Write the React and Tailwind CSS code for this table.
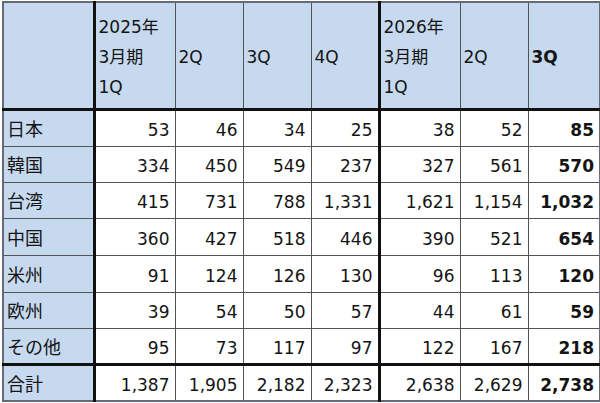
import React from "react";

const rows = [
  ["日本", "53", "46", "34", "25", "38", "52", "85"],
  ["韓国", "334", "450", "549", "237", "327", "561", "570"],
  ["台湾", "415", "731", "788", "1,331", "1,621", "1,154", "1,032"],
  ["中国", "360", "427", "518", "446", "390", "521", "654"],
  ["米州", "91", "124", "126", "130", "96", "113", "120"],
  ["欧州", "39", "54", "50", "57", "44", "61", "59"],
  ["その他", "95", "73", "117", "97", "122", "167", "218"],
];
const total = ["合計", "1,387", "1,905", "2,182", "2,323", "2,638", "2,629", "2,738"];
const heights = ["h-[37px]", "h-[36px]", "h-[36px]", "h-[37px]", "h-[37px]", "h-[36px]", "h-[36px]"];

const thin = "border border-[#505357]";

function cellBorder(ci) {
  let c = thin;
  if (ci === 0) c += " border-l-2 border-l-[#666c74]";
  if (ci === 1 || ci === 5) c += " border-l-[3px] border-l-[#111]";
  if (ci === 7) c += " border-r-2 border-r-[#666c74]";
  return c;
}

function Cell({ v, ci, extra }) {
  return (
    <td
      className={
        cellBorder(ci) +
        (extra || "") +
        " pt-[4px] align-middle" +
        (ci === 0
          ? " bg-[#c6d9ef] pl-[3px] text-left text-[18px]"
          : " bg-white pr-[5px] text-right") +
        (ci === 7 ? " font-bold" : "")
      }
    >
      {v}
    </td>
  );
}

export default function App() {
  return (
    <div className="w-[600px] h-[403px] bg-white pt-[1px] pl-[2px]">
      <table
        className="table-fixed border-collapse w-[597px] text-[17px] text-[#141414] leading-[30px]"
        style={{ fontFamily: '"DejaVu Sans", "Noto Sans CJK JP", sans-serif' }}
      >
        <colgroup>
          <col className="w-[91px]" />
          <col className="w-[81px]" />
          <col className="w-[68px]" />
          <col className="w-[68px]" />
          <col className="w-[68px]" />
          <col className="w-[81px]" />
          <col className="w-[68px]" />
          <col className="w-[72px]" />
        </colgroup>
        <thead>
          <tr className="h-[107px]">
            {["", "2025年\n3月期\n1Q", "2Q", "3Q", "4Q", "2026年\n3月期\n1Q", "2Q", "3Q"].map((v, ci) => (
              <th
                key={ci}
                className={
                  cellBorder(ci) +
                  " border-t-2 border-t-[#666c74] bg-[#c6d9ef] text-left align-middle pl-[3px] pt-[3px] whitespace-pre-line" +
                  (ci === 7 ? " font-bold" : " font-normal")
                }
              >
                {v}
              </th>
            ))}
          </tr>
        </thead>
        <tbody>
          {rows.map((r, i) => (
            <tr key={i} className={heights[i]}>
              {r.map((v, ci) => (
                <Cell key={ci} v={v} ci={ci} extra={i === 0 ? " border-t-[3px] border-t-[#111]" : ""} />
              ))}
            </tr>
          ))}
          <tr className="h-[37px]">
            {total.map((v, ci) => (
              <Cell
                key={ci}
                v={v}
                ci={ci}
                extra=" border-t-[3px] border-t-[#111] border-b-2 border-b-[#666c74]"
              />
            ))}
          </tr>
        </tbody>
      </table>
    </div>
  );
}
